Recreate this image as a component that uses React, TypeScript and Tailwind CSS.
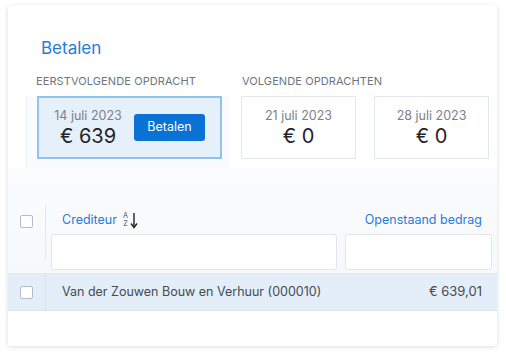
import React from "react";

function Checkbox() {
  return <div className="w-[13px] h-[13px] rounded-[2px] border border-[#b3bcc7] bg-white" />;
}

function SortIcon() {
  return (
    <div className="flex items-center ml-[6px] h-[18px]">
      <div className="flex flex-col items-center text-[7px] text-[#6b7280] font-medium">
        <span className="leading-[8px]">A</span>
        <span className="leading-[8px]">Z</span>
      </div>
      <svg width="8" height="17" viewBox="0 0 8 17" className="ml-[2px]">
        <path d="M4 1 V15" stroke="#222" strokeWidth="1.4" fill="none" />
        <path d="M1 11.5 L4 15.5 L7 11.5" stroke="#222" strokeWidth="1.4" fill="none" />
      </svg>
    </div>
  );
}

export default function App() {
  return (
    <div className="w-[506px] h-[358px] bg-white pt-[5px] pl-[8px]" style={{ fontFamily: "Inter, 'Noto Sans', sans-serif" }}>
      <div className="w-[489px] h-[341px] bg-white rounded-[4px] shadow-[0_1px_5px_rgba(0,0,0,0.14)] overflow-hidden flex flex-col">
        {/* Top section */}
        <div className="h-[163px] flex flex-col">
          <div className="pl-[33px] pt-[29px] h-[66px] text-[17px] text-[#2a7bd8] leading-[28px]">Betalen</div>
          <div className="flex h-[97px]">
            <div className="ml-[18px] w-[204px] bg-[#fafbfc] border-l border-[#eef1f4] flex flex-col">
              <div className="pl-[10px] h-[25px] pt-[2px] bg-white text-[11px] tracking-[0.1px] text-[#6b7480] leading-[16px] -ml-px">EERSTVOLGENDE OPDRACHT</div>
              <div className="ml-[10px] w-[185px] h-[63px] border-2 border-[#8ec3f2] bg-[#e6f0fa] flex items-center">
                <div className="ml-[14px] flex flex-col items-center w-[70px]">
                  <div className="text-[12.5px] text-[#7a818a] leading-[16px]">14 juli 2023</div>
                  <div className="text-[20px] text-[#1f2328] leading-[24px]">€ 639</div>
                </div>
                <div className="ml-[11px] w-[71px] h-[27px] bg-[#0a72d4] rounded-[3px] text-white text-[12.5px] flex items-center justify-center">Betalen</div>
              </div>
            </div>
            <div className="flex-1 bg-white rounded-bl-[4px] flex flex-col">
              <div className="pl-[12px] h-[25px] pt-[2px] text-[11px] tracking-[0.1px] text-[#6b7480] leading-[16px]">VOLGENDE OPDRACHTEN</div>
              <div className="flex gap-[18px] pl-[11px]">
                <div className="w-[115px] h-[63px] border border-[#e3e8ee] bg-white flex flex-col items-center justify-center">
                  <div className="text-[12.5px] text-[#7a818a] leading-[16px]">21 juli 2023</div>
                  <div className="text-[20px] text-[#1f2328] leading-[24px]">€ 0</div>
                </div>
                <div className="w-[115px] h-[63px] border border-[#e3e8ee] bg-white flex flex-col items-center justify-center">
                  <div className="text-[12.5px] text-[#7a818a] leading-[16px]">28 juli 2023</div>
                  <div className="text-[20px] text-[#1f2328] leading-[24px]">€ 0</div>
                </div>
              </div>
            </div>
          </div>
        </div>
        {/* Table header */}
        <div className="h-[106px] bg-gradient-to-b from-[#fbfcfd] to-[#f6f8fa] border-b border-[#e4e7eb] flex">
          <div className="w-[38px] flex flex-col">
            <div className="h-[37px]" />
            <div className="flex-1 flex">
              <div className="flex-1 flex justify-center pt-[10px]"><Checkbox /></div>
              <div className="w-px bg-[#e4e8ec] h-[56px]" />
            </div>
          </div>
          <div className="w-[295px] flex flex-col pl-[5px] pr-[4px]">
            <div className="h-[66px] flex items-end pb-[5px] pl-[11px]">
              <span className="text-[12.5px] text-[#2a7bd8] leading-[18px]">Crediteur</span>
              <SortIcon />
            </div>
            <div className="h-[36px] bg-white border border-[#e2e6ea] rounded-[3px]" />
          </div>
          <div className="flex-1 flex flex-col pl-[4px] pr-[5px]">
            <div className="h-[66px] flex items-end justify-end pb-[5px] pr-[10px]">
              <span className="text-[12.5px] text-[#2a7bd8] leading-[18px]">Openstaand bedrag</span>
            </div>
            <div className="h-[36px] bg-white border border-[#e2e6ea] rounded-[3px]" />
          </div>
        </div>
        {/* Row */}
        <div className="h-[37px] bg-[#e4eef9] border-b border-[#dde3ea] flex items-center">
          <div className="w-[38px] h-full flex items-center justify-center border-r border-[#d8e2ec]"><Checkbox /></div>
          <div className="pl-[16px] text-[12.5px] text-[#434b55] flex-1">Van der Zouwen Bouw en Verhuur (000010)</div>
          <div className="pr-[15px] text-[13px] text-[#434b55]">€ 639,01</div>
        </div>
        <div className="flex-1 bg-white" />
      </div>
    </div>
  );
}
